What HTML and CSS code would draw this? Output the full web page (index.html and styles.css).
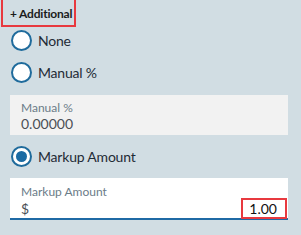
FILE: index.html
```html
<!DOCTYPE html>
<html lang="en">
<head>
  <meta charset="UTF-8">
  <meta name="viewport" content="width=device-width, initial-scale=1.0">
  <title>Pricing Options</title>
  <link rel="stylesheet" href="styles.css">
</head>
<body>
  <div class="panel">
    <div class="additional">+ Additional</div>

    <label class="option first">
      <span class="radio"></span>
      <span class="option-text">None</span>
    </label>
    <label class="option">
      <span class="radio"></span>
      <span class="option-text">Manual %</span>
    </label>

    <div class="field disabled">
      <div class="field-label">Manual %</div>
      <div class="field-value">0.00000</div>
    </div>

    <label class="option markup">
      <span class="radio checked"></span>
      <span class="option-text">Markup Amount</span>
    </label>

    <div class="field active">
      <div class="field-label">Markup Amount</div>
      <div class="field-row">
        <span class="field-value">$</span>
        <span class="amount">1.00</span>
      </div>
    </div>
  </div>
</body>
</html>
```

FILE: styles.css
```css
body {
  margin: 0;
  background-color: #d1dde3;
  font-family: Lato, "Open Sans", sans-serif;
  color: #1e2a33;
}
.panel {
  width: 278px;
  padding-left: 10px;
  overflow: hidden;
}
.additional {
  display: inline-block;
  margin: -2px 0 0 -9px;
  padding: 7px 2px 4px 7px;
  border: 2px solid #e8393f;
  font-size: 12px;
  font-weight: bold;
  letter-spacing: -0.2px;
  color: #1b1b1b;
  line-height: 14px;
}
.option {
  display: flex;
  align-items: center;
  height: 20px;
  margin-top: 12px;
  font-size: 14px;
  cursor: pointer;
}
.option.first {
  margin-top: 3px;
}
.option.markup {
  margin-top: 11px;
}
.radio {
  box-sizing: border-box;
  width: 21px;
  height: 21px;
  margin-left: 1px;
  border: 2.5px solid #1f6b9c;
  border-radius: 50%;
  background-color: #fff;
  display: flex;
  align-items: center;
  justify-content: center;
}
.radio.checked::after {
  content: "";
  width: 11px;
  height: 11px;
  border-radius: 50%;
  background-color: #1b6ba3;
}
.option-text {
  margin-left: 6px;
  letter-spacing: -0.2px;
  color: #1f2b36;
}
.field {
  box-sizing: border-box;
  height: 40px;
  margin-top: 13px;
  padding: 5px 11px 0 11px;
}
.field.disabled {
  background-color: #f2f2f2;
}
.field.active {
  height: 42px;
  margin-top: 12px;
  padding-top: 6px;
  background-color: #fff;
  border-bottom: 2px solid #1f6aa5;
}
.field-label {
  font-size: 12px;
  line-height: 15px;
  color: #6b7c88;
}
.field-value {
  font-size: 14px;
  line-height: 17px;
  color: #4a4f55;
}
.field-row {
  display: flex;
  justify-content: space-between;
  align-items: center;
  margin-top: -1px;
}
.amount {
  box-sizing: border-box;
  width: 46px;
  height: 21px;
  margin-right: -10px;
  padding-right: 8px;
  border: 2px solid #e8393f;
  text-align: right;
  font-size: 14px;
  line-height: 17px;
  color: #111;
}
```
